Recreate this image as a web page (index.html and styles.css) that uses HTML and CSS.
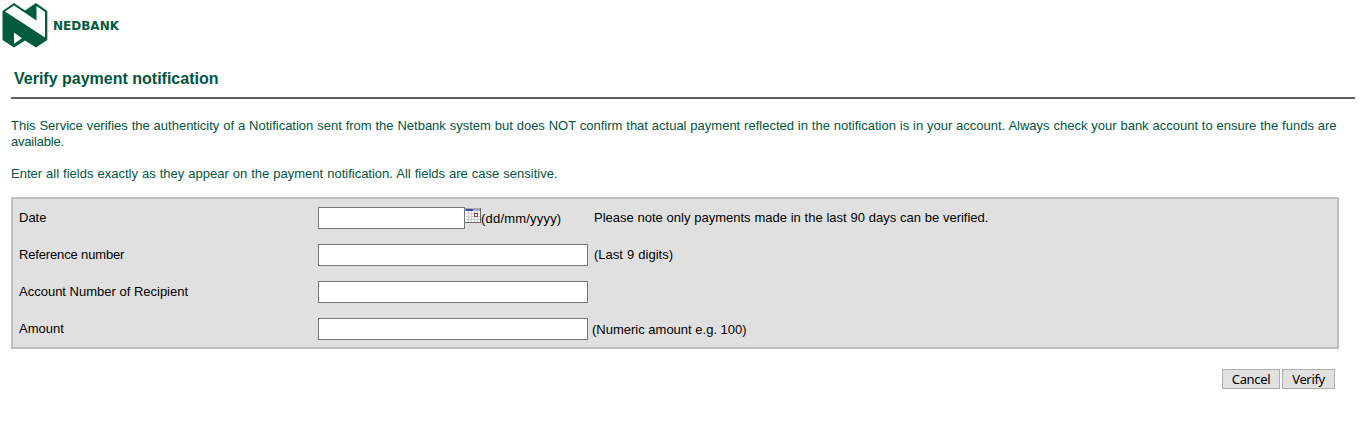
FILE: index.html
```html
<!DOCTYPE html>
<html lang="en">
<head>
<meta charset="utf-8">
<title>Verify payment notification</title>
<link rel="stylesheet" href="styles.css">
</head>
<body>
<header class="brand">
<svg class="logo" width="50" height="50" viewBox="0 0 50 50"><path fill="#015b3c" d="M2.500 11L14 3 25 10.500 36 3 47.300 11V40L36 47.500 25 40.500 14 47.500 2.500 40Z"/><path fill="#fff" d="M5 11.500L14 5.500 36.500 20.500V6L45 12V37.500ZM14 32.500L22 38.200 14 43.800Z"/></svg>
<span class="wordmark">NEDBANK</span>
</header>
<h1 class="title">Verify payment notification</h1>
<p class="intro">This Service verifies the authenticity of a Notification sent from the Netbank system but does NOT confirm that actual payment reflected in the notification is in your account. Always check your bank account to ensure the funds are<br><span class="tail">available.</span></p>
<p class="intro second">Enter all fields exactly as they appear on the payment notification. All fields are case sensitive.</p>
<form class="panel">
<div class="row"><label class="label" for="date">Date</label><input class="field short" id="date"><svg class="calendar" width="16" height="16" viewBox="0 0 16 16" shape-rendering="crispEdges"><path fill="#fff" d="M0 0H16V15H0Z"/><path fill="#aaa" d="M0 0H16V3H0Z"/><path fill="#44a" d="M1 1H8V3H1Z"/><path fill="#ccc" d="M3 3h1v11h-1zM6 3h1v11h-1zM9 3h1v11h-1zM12 3h1v11h-1zM1 5h14v1H1zM1 8h14v1H1zM1 11h14v1H1z"/><path fill="#a44" fill-rule="evenodd" d="M9 5h4v4H9zM10 6v2h2V6z"/><path fill="#666" d="M0 14h15V0h1v15H0z"/></svg><span class="format">(dd/mm/yyyy)</span><span class="note">Please note only payments made in the last 90 days can be verified.</span></div>
<div class="row"><label class="label reference" for="ref">Reference number</label><input class="field" id="ref"><span class="hint digits">(Last 9 digits)</span></div>
<div class="row"><label class="label" for="acc">Account Number of Recipient</label><input class="field" id="acc"></div>
<div class="row"><label class="label" for="amount">Amount</label><input class="field" id="amount"><span class="hint amount">(Numeric amount e.g. 100)</span></div>
</form>
<div class="actions"><button class="button cancel">Cancel</button><button class="button verify">Verify</button></div>
</body>
</html>
```
FILE: styles.css
```css
* { box-sizing: border-box; }
body { margin: 0; background: #fff; color: #000; font: 13px/16px "Liberation Sans", Arial, sans-serif; overflow: hidden; }
.brand { display: flex; height: 50px; }
.logo { flex: none; }
.wordmark { margin: 18px 0 0 3px; color: #015b3c; font: bold 12px/16px "DejaVu Sans", sans-serif; }
.title { margin: 18px 5px 0 11px; padding: 1px 3px 0; height: 31px; border-bottom: 2px solid #5a5a5a; border-bottom-color: #5f5f5f; color: #00563f; font-size: 16px; line-height: 20px; }
.intro { margin: 19px 0 0 11px; color: #00563f; white-space: nowrap; word-spacing: 0.25px; }
.tail { letter-spacing: -0.2px; }
.second { margin-top: 16px; word-spacing: 0.4px; }
.panel { width: 1328px; height: 152px; margin: 15px 0 0 11px; padding: 0 6px; border: 2px solid #bfbfbf; background: #e0e0e0; }
.row { display: flex; align-items: center; height: 37px; white-space: nowrap; }
.label { width: 299px; }
.reference { letter-spacing: -0.15px; }
.field { width: 270px; height: 22px; padding: 1px 2px; border: 1px solid #767676; background: #fff; }
.short { width: 147px; }
.calendar { flex: none; margin-top: -3px; }
.format { width: 113px; margin-top: 2px; letter-spacing: 0.2px; }
.note { word-spacing: 0.17px; }
.hint { margin-left: 6px; }
.digits { word-spacing: 0.5px; }
.amount { margin: 2px 0 0 4px; }
.actions { display: flex; gap: 2px; margin: 20px 25px 0; justify-content: flex-end; }
.button { height: 20px; padding: 0; border: 1px solid #adadad; background: #e1e1e1; color: #000; font: 13px/16px "Noto Sans", sans-serif; letter-spacing: -0.35px; }
.cancel { width: 58px; }
.verify { width: 53px; }
```
